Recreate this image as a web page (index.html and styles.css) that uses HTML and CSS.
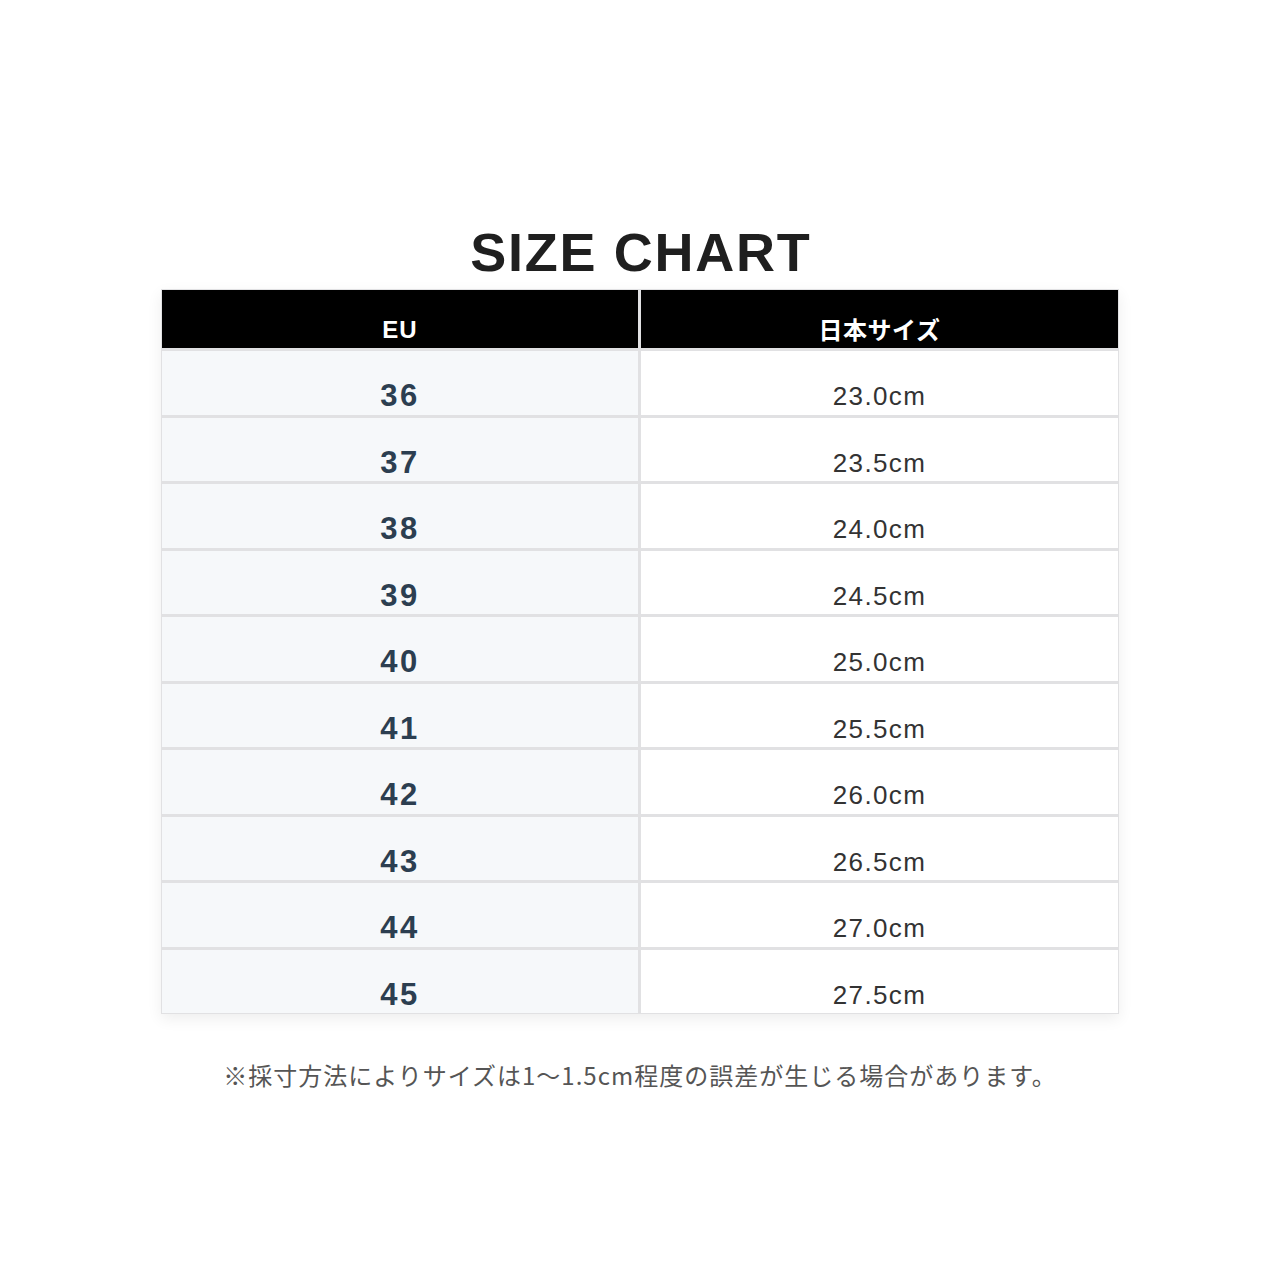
FILE: index.html
```html
<!DOCTYPE html>
<html lang="ja">
<head>
<meta charset="utf-8">
<title>Size Chart</title>
<link rel="stylesheet" href="styles.css">
</head>
<body>
<main class="page">
  <h1 class="title">SIZE CHART</h1>
  <div class="chart">
    <div class="head">EU</div>
    <div class="head jp">日本サイズ</div>
    <div class="eu">36</div><div class="jpsize">23.0cm</div>
    <div class="eu">37</div><div class="jpsize">23.5cm</div>
    <div class="eu">38</div><div class="jpsize">24.0cm</div>
    <div class="eu">39</div><div class="jpsize">24.5cm</div>
    <div class="eu">40</div><div class="jpsize">25.0cm</div>
    <div class="eu">41</div><div class="jpsize">25.5cm</div>
    <div class="eu">42</div><div class="jpsize">26.0cm</div>
    <div class="eu">43</div><div class="jpsize">26.5cm</div>
    <div class="eu">44</div><div class="jpsize">27.0cm</div>
    <div class="eu">45</div><div class="jpsize">27.5cm</div>
  </div>
  <p class="note">※採寸方法によりサイズは1〜1.5cm程度の誤差が生じる場合があります。</p>
</main>
</body>
</html>
```
FILE: styles.css
```css
html, body {
  margin: 0;
  padding: 0;
  background: #ffffff;
}
body {
  width: 1280px;
  height: 1280px;
  font-family: "Liberation Sans", "Noto Sans CJK JP", sans-serif;
}
.page {
  display: flex;
  flex-direction: column;
  align-items: center;
  padding-top: 222px;
}
.title {
  margin: 0 0 7px 0;
  font-size: 54px;
  line-height: 60px;
  font-weight: 700;
  letter-spacing: 1.7px;
  color: #1f1f1f;
  padding-left: 1.7px;
}
.chart {
  display: grid;
  grid-template-columns: 476px 477px;
  grid-template-rows: 58px;
  grid-auto-rows: 63.5px;
  gap: 3px;
  padding: 1px;
  background: #e1e1e3;
  box-shadow: 0 5px 14px rgba(0, 0, 0, 0.07);
}
.chart > div {
  display: flex;
  justify-content: center;
  align-items: flex-start;
  box-sizing: border-box;
  padding-top: 28px;
}
.head {
  background: #000000;
  color: #ffffff;
  font-size: 24px;
  line-height: 26px;
  font-weight: 700;
  letter-spacing: 1px;
}
.chart > .head {
  padding-top: 27px;
}
.chart > .head.jp {
  font-family: "Noto Sans CJK JP", sans-serif;
  font-size: 24px;
  letter-spacing: 0.5px;
  padding-top: 26px;
}
.eu {
  background: #f6f8fa;
  color: #2c3e50;
  font-size: 31px;
  line-height: 34px;
  font-weight: 700;
  letter-spacing: 2.5px;
}
.jpsize {
  background: #ffffff;
  color: #333333;
  font-size: 26px;
  line-height: 34px;
  letter-spacing: 1.4px;
}
.note {
  margin: 44px 0 0 0;
  font-family: "Noto Sans CJK JP", sans-serif;
  font-size: 24px;
  line-height: 34px;
  color: #555555;
  letter-spacing: 1px;
}
```
